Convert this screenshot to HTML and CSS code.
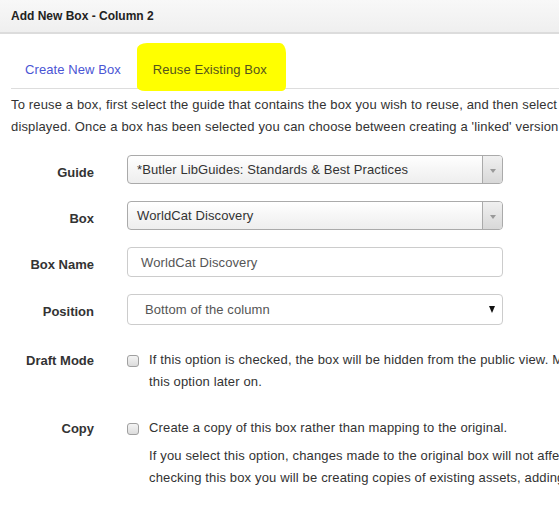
FILE: index.html
```html
<!DOCTYPE html>
<html>
<head>
<meta charset="utf-8">
<title>Add New Box</title>
<link rel="stylesheet" href="styles.css">
</head>
<body>
<div class="modal">
  <div class="modal-header">
    <h4 class="modal-title">Add New Box - Column 2</h4>
  </div>
  <div class="modal-body">
    <ul class="tabs">
      <li class="tab"><a class="tab-link" href="#">Create New Box</a></li>
      <li class="tab tab-active"><span class="highlight"></span><a class="tab-link" href="#">Reuse Existing Box</a></li>
    </ul>
    <p class="intro">
      <span class="line">To reuse a box, first select the guide that contains the box you wish to reuse, and then select the box from the list that is</span>
      <span class="line">displayed. Once a box has been selected you can choose between creating a 'linked' version of the box or a copy of the box.</span>
    </p>
    <div class="form">
      <div class="label pad">Guide</div>
      <div class="control">
        <div class="chosen">
          <span class="chosen-text">*Butler LibGuides: Standards &amp; Best Practices</span>
          <span class="chosen-arrow"><span class="tri"></span></span>
        </div>
      </div>

      <div class="label pad">Box</div>
      <div class="control">
        <div class="chosen">
          <span class="chosen-text">WorldCat Discovery</span>
          <span class="chosen-arrow"><span class="tri"></span></span>
        </div>
      </div>

      <div class="label pad">Box Name</div>
      <div class="control">
        <div class="input">WorldCat Discovery</div>
      </div>

      <div class="label pad">Position</div>
      <div class="control">
        <div class="select">
          <span class="select-text">Bottom of the column</span>
          <span class="select-arrow"></span>
        </div>
      </div>

      <div class="label chk-label draft-label">Draft Mode</div>
      <div class="control check-row draft-row">
        <span class="checkbox"></span>
        <div class="check-text">
          <span class="line">If this option is checked, the box will be hidden from the public view. Make sure to uncheck</span>
          <span class="line">this option later on.</span>
        </div>
      </div>

      <div class="label chk-label copy-label">Copy</div>
      <div class="control check-row copy-row">
        <span class="checkbox"></span>
        <div class="check-text">
          <span class="line">Create a copy of this box rather than mapping to the original.</span>
          <div class="help">
            <span class="line">If you select this option, changes made to the original box will not affect the copy. Please note that by</span>
            <span class="line">checking this box you will be creating copies of existing assets, adding to your asset count.</span>
          </div>
        </div>
      </div>
    </div>
  </div>
</div>
</body>
</html>
```

FILE: styles.css
```css
html, body {
  margin: 0;
  padding: 0;
  background: #ffffff;
  overflow: hidden;
}

body {
  font-family: "Liberation Sans", Arial, sans-serif;
  font-size: 13px;
  color: #333333;
}

.modal {
  width: 900px;
  background: #ffffff;
}

.modal-header {
  height: 32px;
  background: linear-gradient(to bottom, #f8f8f8, #efefef);
  border-bottom: 2px solid #dcdcdc;
  box-sizing: content-box;
  display: flex;
  align-items: center;
  padding-left: 11px;
}

.modal-title {
  margin: 0;
  font-size: 12px;
  font-weight: bold;
  color: #222222;
}

.modal-body {
  padding: 17px 0 0 11px;
}

.tabs {
  list-style: none;
  margin: 0;
  padding: 0;
  display: flex;
  border-bottom: 1px solid #dddddd;
  height: 37px;
}

.tab {
  position: relative;
  display: flex;
  align-items: center;
  margin-right: 5px;
}

.tab-link {
  position: relative;
  display: block;
  padding: 0 14px;
  line-height: 36px;
  color: #4a55d4;
  text-decoration: none;
  font-size: 13px;
  letter-spacing: 0.08px;
}

.tab-active {
  border: 1px solid #dddddd;
  border-bottom-color: transparent;
  border-radius: 4px 4px 0 0;
  margin-bottom: -1px;
  background: #ffff00;
}

.tab-active .tab-link {
  color: #54541c;
  padding: 0 15px 0 12px;
}

.highlight {
  position: absolute;
  left: -4px;
  right: -4px;
  top: -9px;
  bottom: -3px;
  background: #ffff00;
  border-radius: 10px 6px 4px 8px / 6px 10px 5px 4px;
}

.intro {
  margin: 5px 0 0 0;
  line-height: 22px;
  color: #333333;
  letter-spacing: 0.15px;
}

.line {
  display: block;
  white-space: nowrap;
}

.form {
  display: grid;
  grid-template-columns: 83px 376px;
  column-gap: 33px;
  margin-top: 17px;
  align-items: start;
}

.label {
  font-weight: bold;
  text-align: right;
  line-height: 22px;
  white-space: nowrap;
  color: #333333;
}

.label.pad {
  padding-top: 7px;
  margin-bottom: 16px;
}

.control {
  margin-bottom: 17px;
}

.chosen {
  height: 27px;
  border: 1px solid #aaaaaa;
  border-radius: 4px;
  background: linear-gradient(to bottom, #ffffff 0%, #f6f6f6 50%, #eeeeee 100%);
  display: flex;
  align-items: center;
  position: relative;
  overflow: hidden;
}

.chosen-text {
  flex: 1;
  padding-left: 9px;
  color: #333333;
  white-space: nowrap;
  letter-spacing: 0.1px;
}

.chosen-arrow {
  width: 19px;
  height: 100%;
  border-left: 1px solid #aaaaaa;
  background: linear-gradient(to bottom, #f0f0f0, #d8d8d8);
  display: flex;
  align-items: center;
  justify-content: center;
}

.tri {
  width: 0;
  height: 0;
  border-left: 3px solid transparent;
  border-right: 3px solid transparent;
  border-top: 4px solid #999999;
  margin-top: 2px;
}

.input {
  height: 28px;
  border: 1px solid #cccccc;
  border-radius: 4px;
  display: flex;
  align-items: center;
  padding-left: 13px;
  color: #555555;
  letter-spacing: 0.1px;
}

.select {
  height: 29px;
  border: 1px solid #cccccc;
  border-radius: 4px;
  display: flex;
  align-items: center;
  padding-left: 17px;
  padding-right: 7px;
  color: #555555;
  letter-spacing: 0.1px;
}

.select-text {
  flex: 1;
}

.select-arrow {
  width: 0;
  height: 0;
  border-left: 3.5px solid transparent;
  border-right: 3.5px solid transparent;
  border-top: 7px solid #111111;
}

.chk-label {
  padding-top: 1px;
}

.draft-label {
  margin-top: 7px;
}

.draft-row {
  margin-top: 7px;
  margin-bottom: 24px;
}

.copy-label {
  margin-top: 0;
}

.check-row {
  display: flex;
  align-items: flex-start;
}

.checkbox {
  flex: none;
  width: 10px;
  height: 10px;
  margin-top: 6px;
  margin-right: 10px;
  border: 1px solid #a0a0a0;
  border-radius: 3px;
  background: linear-gradient(to bottom, #f4f4f4, #dcdcdc);
}

.check-text {
  line-height: 22px;
  color: #333333;
  letter-spacing: 0.15px;
}

.help {
  margin-top: 6px;
}
```
